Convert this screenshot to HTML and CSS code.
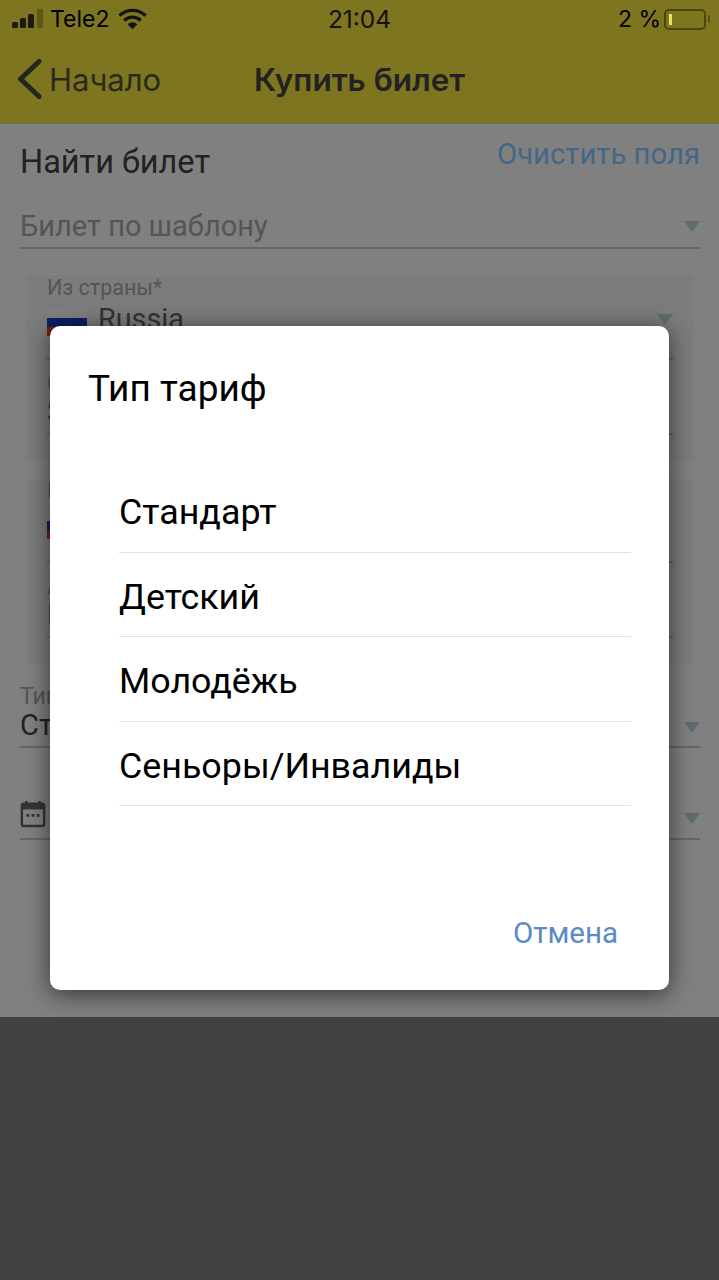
FILE: index.html
```html
<!DOCTYPE html>
<html lang="ru">
<head>
  <meta charset="UTF-8">
  <meta name="viewport" content="width=device-width, initial-scale=1.0">
  <title>Купить билет</title>
  <link rel="stylesheet" href="styles.css">
</head>
<body>

  <div class="app">
    <header class="topBar">
      <div class="statusBar">
        <div class="statusLeft">
          <svg class="signal" width="32" height="20" viewBox="0 0 32 20">
            <rect x="0" y="13" width="6" height="6" rx="1.5" fill="#1b1b12"/>
            <rect x="8" y="9" width="6" height="10" rx="1.5" fill="#1b1b12"/>
            <rect x="16" y="5" width="6" height="14" rx="1.5" fill="#1b1b12"/>
            <rect x="25" y="0" width="6" height="19" rx="1" fill="#5e5818"/>
          </svg>
          <span>Tele2</span>
          <svg class="wifi" width="29" height="22" viewBox="0 0 30 22">
            <path d="M1.5 7.5a19.5 19.5 0 0 1 27 0" fill="none" stroke="#14140c" stroke-width="3.4"/>
            <path d="M6.5 12.5a12.4 12.4 0 0 1 17 0" fill="none" stroke="#14140c" stroke-width="3.4"/>
            <path d="M10 16.5a7 7 0 0 1 10 0L15 21.5z" fill="#14140c"/>
          </svg>
        </div>
        <div class="statusTime">21:04</div>
        <div class="statusRight">
          <span>2 %</span>
          <div class="battery"><div class="batteryLevel"></div></div>
          <div class="batteryTip"></div>
        </div>
      </div>
      <nav class="navBar">
        <div class="navBack">
          <svg width="28" height="42" viewBox="0 0 28 42">
            <path d="M24 3.5L5.5 21 24 38.5" fill="none" stroke="#26261a" stroke-width="5" stroke-linecap="round" stroke-linejoin="round"/>
          </svg>
          <span>Начало</span>
        </div>
        <div class="navTitle">Купить билет</div>
      </nav>
    </header>

    <main class="content">
      <div class="searchHead">
        <h1>Найти билет</h1>
        <a class="clearLink">Очистить поля</a>
      </div>

      <div class="selectRow templateRow">
        <span class="placeholder">Билет по шаблону</span>
        <i class="arrow"></i>
      </div>

      <section class="routeCard">
        <div class="field fieldCountry">
          <label>Из страны*</label>
          <div class="fieldValue"><span class="flag"></span><span>Russia</span></div>
          <i class="arrow"></i>
        </div>
        <div class="field fieldCity">
          <label>Станция*</label>
          <div class="fieldValue"><span>Saint Petersburg</span></div>
        </div>
      </section>

      <section class="routeCard">
        <div class="field fieldCountry">
          <label>В страну*</label>
          <div class="fieldValue"><span class="flag"></span><span>Russia</span></div>
        </div>
        <div class="field fieldCity">
          <label>Аэропорт*</label>
          <div class="fieldValue"><span>Moscow</span></div>
        </div>
      </section>

      <div class="selectRow tariffRow">
        <div>
          <label>Тип тарифа</label>
          <div class="fieldValue">Стандарт</div>
        </div>
        <i class="arrow"></i>
      </div>

      <div class="selectRow dateRow">
        <svg width="26" height="28" viewBox="0 0 28 30">
          <path d="M7 1v4M21 1v4" stroke="#333" stroke-width="2.6"/>
          <rect x="2" y="4" width="24" height="24" rx="2" fill="none" stroke="#333" stroke-width="2.6"/>
          <rect x="2" y="4" width="24" height="6" fill="#333"/>
          <rect x="7" y="15" width="3" height="3" fill="#333"/>
          <rect x="12.5" y="15" width="3" height="3" fill="#333"/>
          <rect x="18" y="15" width="3" height="3" fill="#333"/>
        </svg>
        <i class="arrow"></i>
      </div>
    </main>
  </div>

  <div class="overlay">
    <div class="dialog">
      <h2>Тип тариф</h2>
      <ul class="optionList">
        <li>Стандарт</li>
        <li>Детский</li>
        <li>Молодёжь</li>
        <li>Сеньоры/Инвалиды</li>
      </ul>
      <div class="dialogActions"><a class="cancelBtn">Отмена</a></div>
    </div>
  </div>

</body>
</html>
```

FILE: styles.css
```css
* {
  box-sizing: border-box;
}
body {
  margin: 0;
  height: 1280px;
  overflow: hidden;
  background-color: #424242;
  font-family: 'Roboto', 'Noto Sans', sans-serif;
  color: #222;
  position: relative;
}
.app {
  height: 1017px;
  background-color: #808080;
}
.topBar {
  height: 124px;
  background-color: #7d7520;
  border-bottom: 1px solid #6a6a5a;
  font-family: 'Inter', 'Roboto', sans-serif;
  color: #000;
}
.statusBar {
  height: 38px;
  padding: 0 12px;
  display: grid;
  grid-template-columns: 1fr auto 1fr;
  align-items: center;
  font-size: 23px;
}
.statusLeft {
  display: flex;
  align-items: center;
  gap: 6px;
}
.statusLeft .wifi {
  margin-left: 3px;
}
.statusTime {
  font-size: 24.5px;
  color: #111;
}
.statusRight {
  display: flex;
  align-items: center;
  justify-content: flex-end;
  margin-right: -3px;
}
.battery {
  width: 42px;
  height: 21px;
  margin-left: 3px;
  border: 2px solid #4a4510;
  border-radius: 5px;
  padding: 3px;
}
.batteryLevel {
  width: 3px;
  height: 100%;
  background-color: #f0e060;
}
.batteryTip {
  width: 2px;
  height: 8px;
  margin-left: 2px;
  background-color: #5a5414;
}
.navBar {
  height: 85px;
  position: relative;
  display: flex;
  align-items: center;
  justify-content: center;
  font-size: 31.5px;
  padding-bottom: 2px;
}
.navBack {
  position: absolute;
  left: 15px;
  top: 20px;
  display: flex;
  align-items: center;
  gap: 6px;
  font-size: 31px;
  color: #2a2a1a;
}
.navTitle {
  font-weight: 600;
  color: #222;
}
.content {
  padding: 18px 19px 0 20px;
}
.searchHead {
  display: flex;
  justify-content: space-between;
  align-items: flex-start;
}
h1 {
  margin: 0;
  font-size: 32.5px;
  font-weight: 400;
  line-height: 40px;
  color: #222;
}
.clearLink {
  font-size: 29.3px;
  line-height: 24px;
  color: #466687;
}
.selectRow {
  display: flex;
  justify-content: space-between;
  border-bottom: 2px solid #666;
}
.templateRow {
  margin-top: 23px;
  height: 44px;
  align-items: center;
}
.placeholder {
  font-size: 29px;
  color: #555;
}
.arrow {
  display: block;
  width: 0;
  height: 0;
  border-left: 8px solid transparent;
  border-right: 8px solid transparent;
  border-top: 11px solid #5f6c70;
}
.routeCard {
  margin: 27px 7px 0 7px;
  height: 184px;
  background-color: #7c7c7c;
  padding: 0 20px;
  overflow: hidden;
}
.routeCard + .routeCard {
  margin-top: 19px;
}
.field {
  position: relative;
  border-bottom: 2px solid #666;
}
.fieldCountry {
  height: 84px;
}
.fieldCity {
  height: 75px;
  padding-top: 12px;
}
.fieldCity .fieldValue {
  line-height: 32px;
}
label {
  display: block;
  font-size: 21.5px;
  line-height: 24px;
  color: #555;
}
.fieldValue {
  display: flex;
  align-items: center;
  gap: 11px;
  font-size: 28.8px;
  line-height: 38px;
  color: #333;
}
.flag {
  width: 40px;
  height: 27px;
  margin-top: 6px;
  background: linear-gradient(#808080 0 33%, #0a2060 33% 66%, #7c1e14 66%);
}
.field .arrow {
  position: absolute;
  right: 0;
  top: 38px;
}
.tariffRow {
  margin-top: 18px;
  height: 67px;
  align-items: flex-end;
  padding-bottom: 5px;
}
.tariffRow label {
  font-size: 23px;
}
.tariffRow .fieldValue {
  color: #222;
  line-height: 32px;
  font-size: 29px;
}
.tariffRow .arrow {
  margin-bottom: 8px;
}
.dateRow {
  margin-top: 35px;
  height: 57px;
  align-items: center;
  padding-top: 6px;
}
.dateRow .arrow {
  margin-top: 10px;
}
.overlay {
  position: absolute;
  inset: 0;
  padding: 326px 50px 0;
}
.dialog {
  height: 664px;
  background-color: #fff;
  border-radius: 10px;
  box-shadow: 0 4px 24px rgba(0, 0, 0, 0.6);
  padding: 39px 38px 0;
  display: flex;
  flex-direction: column;
}
h2 {
  margin: 0;
  font-size: 37px;
  font-weight: 400;
  line-height: 48px;
  color: #000;
}
.optionList {
  list-style: none;
  margin: 55px 0 0;
  padding: 0 0 0 31px;
}
.optionList li {
  height: 84.5px;
  line-height: 89px;
  font-size: 35.8px;
  color: #000;
  border-bottom: 1px solid #e2e2e2;
}
.dialogActions {
  margin-top: auto;
  margin-bottom: 40px;
  padding-right: 13px;
  text-align: right;
}
.cancelBtn {
  font-size: 29.5px;
  color: #5b8ac5;
}
```
